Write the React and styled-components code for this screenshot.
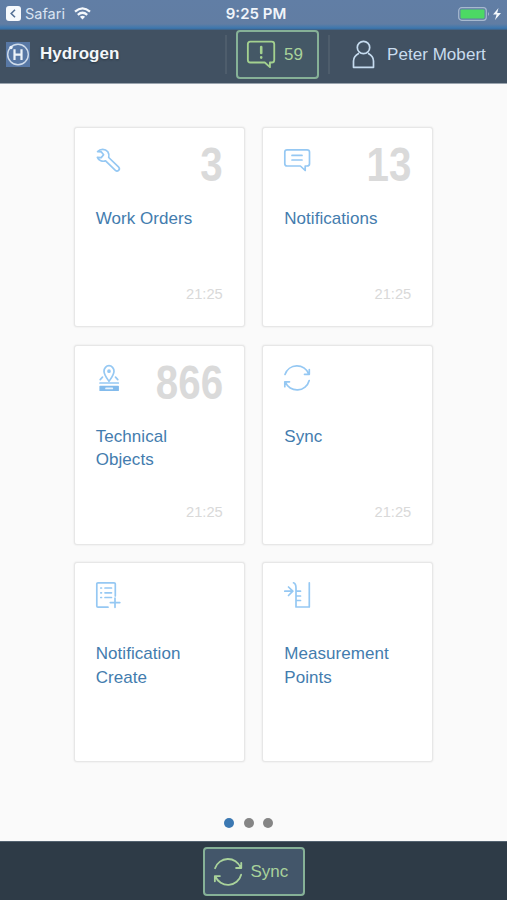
import React, { Component } from "react";
import styled, { createGlobalStyle } from "styled-components";

const GlobalStyle = createGlobalStyle`
  * {
    box-sizing: border-box;
  }
  body {
    margin: 0;
    background-color: #fafafa;
    font-family: "Liberation Sans", Arial, sans-serif;
  }
`;

const AppWrapper = styled.div`
  display: flex;
  flex-direction: column;
  width: 100%;
  height: 100vh;
  overflow: hidden;
`;

const StatusBar = styled.div`
  display: grid;
  grid-template-columns: 1fr auto 1fr;
  align-items: center;
  flex: none;
  height: 30px;
  padding: 0 5px 3px 6px;
  background: linear-gradient(#617ea5 0, #617da3 24px, #3d77ae 28px, #3a6da0 29px, #425b75 30px);
  color: #f1f5fa;
  font-family: Inter, sans-serif;
  font-size: 15px;
`;

const BackLink = styled.div`
  display: flex;
  align-items: center;
  color: #d9e4f2;
  font-size: 14.5px;
`;

const BackText = styled.span`
  margin: 0 9px 0 4px;
`;

const Clock = styled.div`
  padding-left: 4px;
  font-weight: 600;
`;

const Battery = styled.div`
  display: flex;
  justify-content: flex-end;
`;

const Header = styled.header`
  display: flex;
  align-items: flex-start;
  flex: none;
  height: 54px;
  background-color: #415162;
  border-bottom: 1px solid #9aa4ae;
  color: #c9dcee;
  font-size: 17px;
`;

const Brand = styled.div`
  display: flex;
  align-items: center;
  width: 225px;
  height: 49px;
  padding-left: 6px;
`;

const BrandName = styled.h1`
  margin: 0 0 1px 10px;
  color: #f3f7fa;
  font-size: 17px;
  text-shadow: 0 1px 2px #2a3642;
`;

const Divider = styled.div`
  width: 2px;
  height: 39px;
  margin-top: 5px;
  background-color: #4e5d6c;
`;

const OutlineButton = styled.button`
  display: flex;
  align-items: center;
  width: ${props => props.$width}px;
  height: 49px;
  margin: ${props => props.$margin || 0};
  padding: 0 0 0 ${props => props.$indent}px;
  gap: 9px;
  background-color: ${props => props.$fill};
  border: 2px solid #86b197;
  border-radius: 4px;
  color: #a9d29b;
  font-family: inherit;
  font-size: 17px;
`;

const User = styled.div`
  display: flex;
  align-items: center;
  height: 49px;
  padding-left: 22px;
  gap: 12px;
  letter-spacing: 0.05px;
`;

const Body = styled.main`
  display: flex;
  flex-direction: column;
  align-items: center;
  flex: 1;
  padding-top: 43px;
`;

const TileGrid = styled.div`
  display: grid;
  grid-template-columns: 171px 171px;
  grid-auto-rows: 200px;
  gap: 17.5px 17.5px;
`;

const TileBox = styled.div`
  display: flex;
  flex-direction: column;
  padding: 19px 21px 22px;
  background-color: #ffffff;
  border: 1px solid #e7e7e7;
  border-radius: 3px;
  box-shadow: 0 0 2px #e0e0e0;
`;

const TileTop = styled.div`
  display: flex;
  justify-content: space-between;
  height: 60px;
`;

const TileCount = styled.div`
  color: #dadada;
  font-size: 48px;
  font-weight: bold;
  line-height: 35px;
  transform: scaleX(0.84);
  transform-origin: right;
`;

const TileLabel = styled.div`
  width: 115px;
  color: #437cae;
  font-size: 17px;
  line-height: 23.5px;
  letter-spacing: 0.05px;
`;

const TileTime = styled.div`
  margin-top: auto;
  color: #d9d9d9;
  font-size: 14.7px;
  line-height: 20px;
  text-align: right;
`;

const Dots = styled.div`
  display: flex;
  gap: 9.5px;
  margin: 56px 10px 0 0;
`;

const Dot = styled.div`
  width: 10px;
  height: 10px;
  border-radius: 50%;
  background-color: ${props => (props.$active ? "#3b78b2" : "#858585")};
`;

const Footer = styled.footer`
  display: flex;
  justify-content: center;
  flex: none;
  height: 59px;
  padding-top: 5px;
  background-color: #2e3b47;
  border-top: 1px solid #536270;
`;

const Svg = styled.svg`
  display: block;
  flex: none;
  overflow: visible;
`;

const Icon = ({ size = 26, stroke = "#95c8f3", children }) => (
  <Svg
    width={size}
    height={size}
    viewBox="0 0 26 26"
    fill="none"
    stroke={stroke}
    strokeWidth="1.7"
    strokeLinecap="round"
    strokeLinejoin="round"
  >
    {children}
  </Svg>
);

const WrenchIcon = () => (
  <Icon>
    <path d="M1.6 4.6C4.2 1.6 9.2 1.4 11.8 4.8C13 6.6 13.2 8.6 12.7 10.5L22.7 20.2C24.6 22.4 21.6 25.4 19.4 23.4L9.6 13.8C6.4 15 2.6 13.6 1.4 10.4L5.2 10.6L7.6 7.8L5.4 4.9Z" />
  </Icon>
);

const BubbleIcon = () => (
  <Icon>
    <path d="M3 2.8H23Q25.5 2.8 25.5 5V16.7Q25.5 19 23 19H21.2V23.5L16.4 19H3Q.8 19 .8 16.7V5Q.8 2.8 3 2.8ZM8 8.4H18M8 13H18" />
  </Icon>
);

const LocationIcon = () => (
  <Icon>
    <path d="M13 16.3C10 12 8 9.5 8 6.2A5 5.5 0 0 1 18 6.2C18 9.5 16 12 13 16.3ZM6.5 12.2 4.2 14.7M19.5 12.2 21.8 14.7" />
    <circle cx="13" cy="6.2" r="1" fill="#95c8f3" />
    <path d="M4 18H22.3" />
    <path d="M4 21.3H22.3V25.5H4Z" fill="#83bbec" stroke="#83bbec" strokeWidth="1.2" />
    <path d="M10 23.4H16.3" stroke="#e6f2fc" />
  </Icon>
);

const SyncIcon = ({ size, stroke }) => (
  <Icon size={size} stroke={stroke}>
    <path d="M1 9.5A12.6 12.6 0 0 1 24.7 9M25.3 4.5V9.3H20.5M25.2 15.5A12.6 12.6 0 0 1 1.3 17M.8 21.7V16.8H5.5" />
  </Icon>
);

const ListAddIcon = () => (
  <Icon>
    <path d="M19.3 14V2Q19.3.8 18 .8H2Q.8.8.8 2V24Q.8 25.2 2 25.2H12M4.8 6H5.5M9 6H15.5M4.8 10.8H5.5M9 10.8H15.5M4.8 15.5H5.5M9 15.5H15.5M19 16V25.3M14.3 20.6H23.8" />
  </Icon>
);

const MeasureIcon = () => (
  <Icon>
    <path d="M9.5.8C12 1.8 12 3.8 12 6V25H25.3V.8M12 9.2H16.5M12 14H16.5M12 18.5H16.5M.8 9.2H8.8M4.5 5 8.8 9.2 4.5 13.5" />
  </Icon>
);

const AlertIcon = () => (
  <Icon size={28} stroke="#a3d18f">
    <path d="M3 .6H23Q25.3.6 25.3 2.9V17.6Q25.3 20 23 20H21.3V24.3L16.5 20H3Q.8 20 .8 17.6V2.9Q.8.6 3 .6Z" />
    <path d="M13.2 5.6V11.2M13.2 15.2V15.4" strokeWidth="2.4" />
  </Icon>
);

const UserIcon = () => (
  <Svg width="23" height="29" viewBox="0 0 23 29" fill="none" stroke="#c5dbef" strokeWidth="1.7">
    <circle cx="11.5" cy="7.5" r="6.2" />
    <path d="M7 13.2Q1.5 16 1.5 21V27.3H21.5V21Q21.5 16 16 13.2" strokeLinejoin="round" />
  </Svg>
);

const Logo = () => (
  <Svg width="24" height="25" viewBox="0 0 24 25">
    <rect width="24" height="25" fill="#5878a5" />
    <circle cx="12" cy="12.5" r="10.3" fill="none" stroke="#cfdceb" strokeWidth="1.4" />
    <path d="M8.5 7.3V18M15.5 7.3V18M8.5 12.7H15.5" stroke="#edf3f9" strokeWidth="2.2" />
    <circle cx="5" cy="5.5" r="1.7" fill="#edf3f9" />
  </Svg>
);

const BackIcon = () => (
  <Svg width="15" height="15" viewBox="0 0 15 15">
    <rect width="15" height="15" rx="3" fill="#f6f9fc" />
    <path d="M9 3.7 5.2 7.5 9 11.3" fill="none" stroke="#536f94" strokeWidth="1.6" />
  </Svg>
);

const WifiIcon = () => (
  <Svg width="17" height="13" viewBox="0 0 17 13" fill="none" stroke="#f4f8fc" strokeWidth="2.3">
    <path d="M1 4.6Q8.5-1.8 16 4.6M3.8 7.8Q8.5 3.8 13.2 7.8" />
    <path d="M8.5 12.5 5.9 9.8Q8.5 7.8 11.1 9.8Z" fill="#f4f8fc" stroke="none" />
  </Svg>
);

const BatteryIcon = () => (
  <Svg width="44" height="14" viewBox="0 0 44 14">
    <rect x=".7" y=".7" width="27.6" height="12.6" rx="3" fill="none" stroke="#a7b9cf" strokeWidth="1.2" />
    <rect x="2.5" y="2.5" width="24" height="9" rx="1" fill="#4cd964" />
    <path d="M30 5Q32 7 30 9Z" fill="#a7b9cf" />
    <path d="M40.5 1 35 7.6H38.6L37 13 43 6.1H39.2Z" fill="#f5f9fc" />
  </Svg>
);

const tiles = [
  { label: "Work Orders", icon: WrenchIcon, count: 3, time: "21:25" },
  { label: "Notifications", icon: BubbleIcon, count: 13, time: "21:25" },
  { label: "Technical Objects", icon: LocationIcon, count: 866, time: "21:25" },
  { label: "Sync", icon: SyncIcon, time: "21:25" },
  { label: "Notification Create", icon: ListAddIcon },
  { label: "Measurement Points", icon: MeasureIcon }
];

const Tile = ({ tile }) => {
  const TileIcon = tile.icon;
  return (
    <TileBox>
      <TileTop>
        <TileIcon />
        {tile.count ? <TileCount>{tile.count}</TileCount> : null}
      </TileTop>
      <TileLabel>{tile.label}</TileLabel>
      {tile.time ? <TileTime>{tile.time}</TileTime> : null}
    </TileBox>
  );
};

class App extends Component {
  state = { page: 0 };

  render() {
    return (
      <AppWrapper>
        <GlobalStyle />
        <StatusBar>
          <BackLink>
            <BackIcon />
            <BackText>Safari</BackText>
            <WifiIcon />
          </BackLink>
          <Clock>9:25 PM</Clock>
          <Battery>
            <BatteryIcon />
          </Battery>
        </StatusBar>

        <Header>
          <Brand>
            <Logo />
            <BrandName>Hydrogen</BrandName>
          </Brand>
          <Divider />
          <OutlineButton $width={83} $indent={9} $margin="0 9px 0 9px" $fill="#445866">
            <AlertIcon />
            59
          </OutlineButton>
          <Divider />
          <User>
            <UserIcon />
            Peter Mobert
          </User>
        </Header>

        <Body>
          <TileGrid>
            {tiles.map(tile => (
              <Tile key={tile.label} tile={tile} />
            ))}
          </TileGrid>
          <Dots>
            {[0, 1, 2].map(page => (
              <Dot
                key={page}
                $active={page === this.state.page}
                onClick={() => this.setState({ page })}
              />
            ))}
          </Dots>
        </Body>

        <Footer>
          <OutlineButton $width={102} $indent={9} $fill="#43566a">
            <SyncIcon size={28} stroke="#a9d29b" />
            Sync
          </OutlineButton>
        </Footer>
      </AppWrapper>
    );
  }
}

export default App;
